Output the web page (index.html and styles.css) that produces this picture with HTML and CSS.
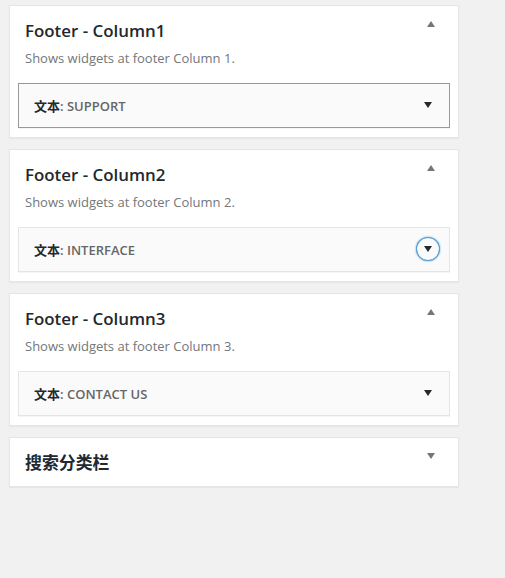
FILE: index.html
```html
<!DOCTYPE html>
<html lang="zh-CN">
<head>
<meta charset="utf-8">
<title>Widgets</title>
<link rel="stylesheet" href="styles.css">
</head>
<body>
<div class="sidebars">
  <section class="sidebar">
    <div class="sidebar-head">
      <h2>Footer - Column1</h2>
      <span class="toggle"><svg viewBox="0 0 20 20" width="20" height="20"><path d="M6 13h8l-4-6z"/></svg></span>
    </div>
    <p class="sidebar-desc">Shows widgets at footer Column 1.</p>
    <div class="widget-list">
      <div class="widget widget-hover">
        <h3>文本<span class="in-title">: SUPPORT</span></h3>
        <span class="widget-action"><svg viewBox="0 0 20 20" width="20" height="20"><path d="M6 7h8l-4 6z"/></svg></span>
      </div>
    </div>
  </section>

  <section class="sidebar">
    <div class="sidebar-head">
      <h2>Footer - Column2</h2>
      <span class="toggle"><svg viewBox="0 0 20 20" width="20" height="20"><path d="M6 13h8l-4-6z"/></svg></span>
    </div>
    <p class="sidebar-desc">Shows widgets at footer Column 2.</p>
    <div class="widget-list">
      <div class="widget">
        <h3>文本<span class="in-title">: INTERFACE</span></h3>
        <span class="widget-action focused"><svg viewBox="0 0 20 20" width="20" height="20"><path d="M6 7h8l-4 6z"/></svg></span>
      </div>
    </div>
  </section>

  <section class="sidebar">
    <div class="sidebar-head">
      <h2>Footer - Column3</h2>
      <span class="toggle"><svg viewBox="0 0 20 20" width="20" height="20"><path d="M6 13h8l-4-6z"/></svg></span>
    </div>
    <p class="sidebar-desc">Shows widgets at footer Column 3.</p>
    <div class="widget-list">
      <div class="widget">
        <h3>文本<span class="in-title">: CONTACT US</span></h3>
        <span class="widget-action"><svg viewBox="0 0 20 20" width="20" height="20"><path d="M6 7h8l-4 6z"/></svg></span>
      </div>
    </div>
  </section>

  <section class="sidebar closed">
    <div class="sidebar-head">
      <h2>搜索分类栏</h2>
      <span class="toggle"><svg viewBox="0 0 20 20" width="20" height="20"><path d="M6 7h8l-4 6z"/></svg></span>
    </div>
  </section>
</div>
</body>
</html>
```

FILE: styles.css
```css
* {
  box-sizing: border-box;
}

html, body {
  margin: 0;
  padding: 0;
  background: #f1f1f1;
}

body {
  font-family: "Open Sans", "Noto Sans CJK SC", sans-serif;
  font-size: 13px;
  color: #23282d;
}

.sidebars {
  padding: 5px 0 0 9px;
  width: 459px;
}

.sidebar {
  background: #fff;
  border: 1px solid #e5e5e5;
  box-shadow: 0 1px 1px rgba(0, 0, 0, 0.04);
  margin-bottom: 11px;
}

.sidebar-head {
  display: flex;
  align-items: flex-start;
  padding: 13px 17px 5px 15px;
}

.sidebar.closed .sidebar-head {
  padding-bottom: 11px;
}

.sidebar-head h2 {
  flex: 1;
  margin: 0;
  font-size: 16.9px;
  line-height: 24px;
  font-weight: 600;
  color: #23282d;
}

.toggle {
  display: flex;
  width: 20px;
  height: 20px;
  margin-top: -5px;
}

.toggle svg {
  fill: #72777c;
}

.sidebar-desc {
  margin: 0 0 15px;
  padding: 0 15px;
  font-size: 13px;
  line-height: 20px;
  color: #72777c;
}

.widget-list {
  padding: 0 8px 9px;
}

.widget {
  display: flex;
  align-items: center;
  background: #fafafa;
  border: 1px solid #e5e5e5;
  box-shadow: 0 1px 1px rgba(0, 0, 0, 0.04);
}

.widget.widget-hover {
  border-color: #999;
}

.widget h3 {
  flex: 1;
  margin: 0;
  padding: 16px 15px 14px;
  font-size: 13px;
  line-height: 13px;
  font-weight: 600;
  color: #23282d;
  white-space: nowrap;
}

.in-title {
  color: #666;
}

.widget-action {
  display: flex;
  align-items: center;
  justify-content: center;
  width: 22px;
  height: 22px;
  margin: -2px 10px 0 0;
  border-radius: 50%;
}

.widget-action svg {
  fill: #23282d;
}

.widget-action.focused {
  box-shadow: 0 0 0 1px #5b9dd9, 0 0 2px 1px rgba(30, 140, 190, 0.8);
}
```
